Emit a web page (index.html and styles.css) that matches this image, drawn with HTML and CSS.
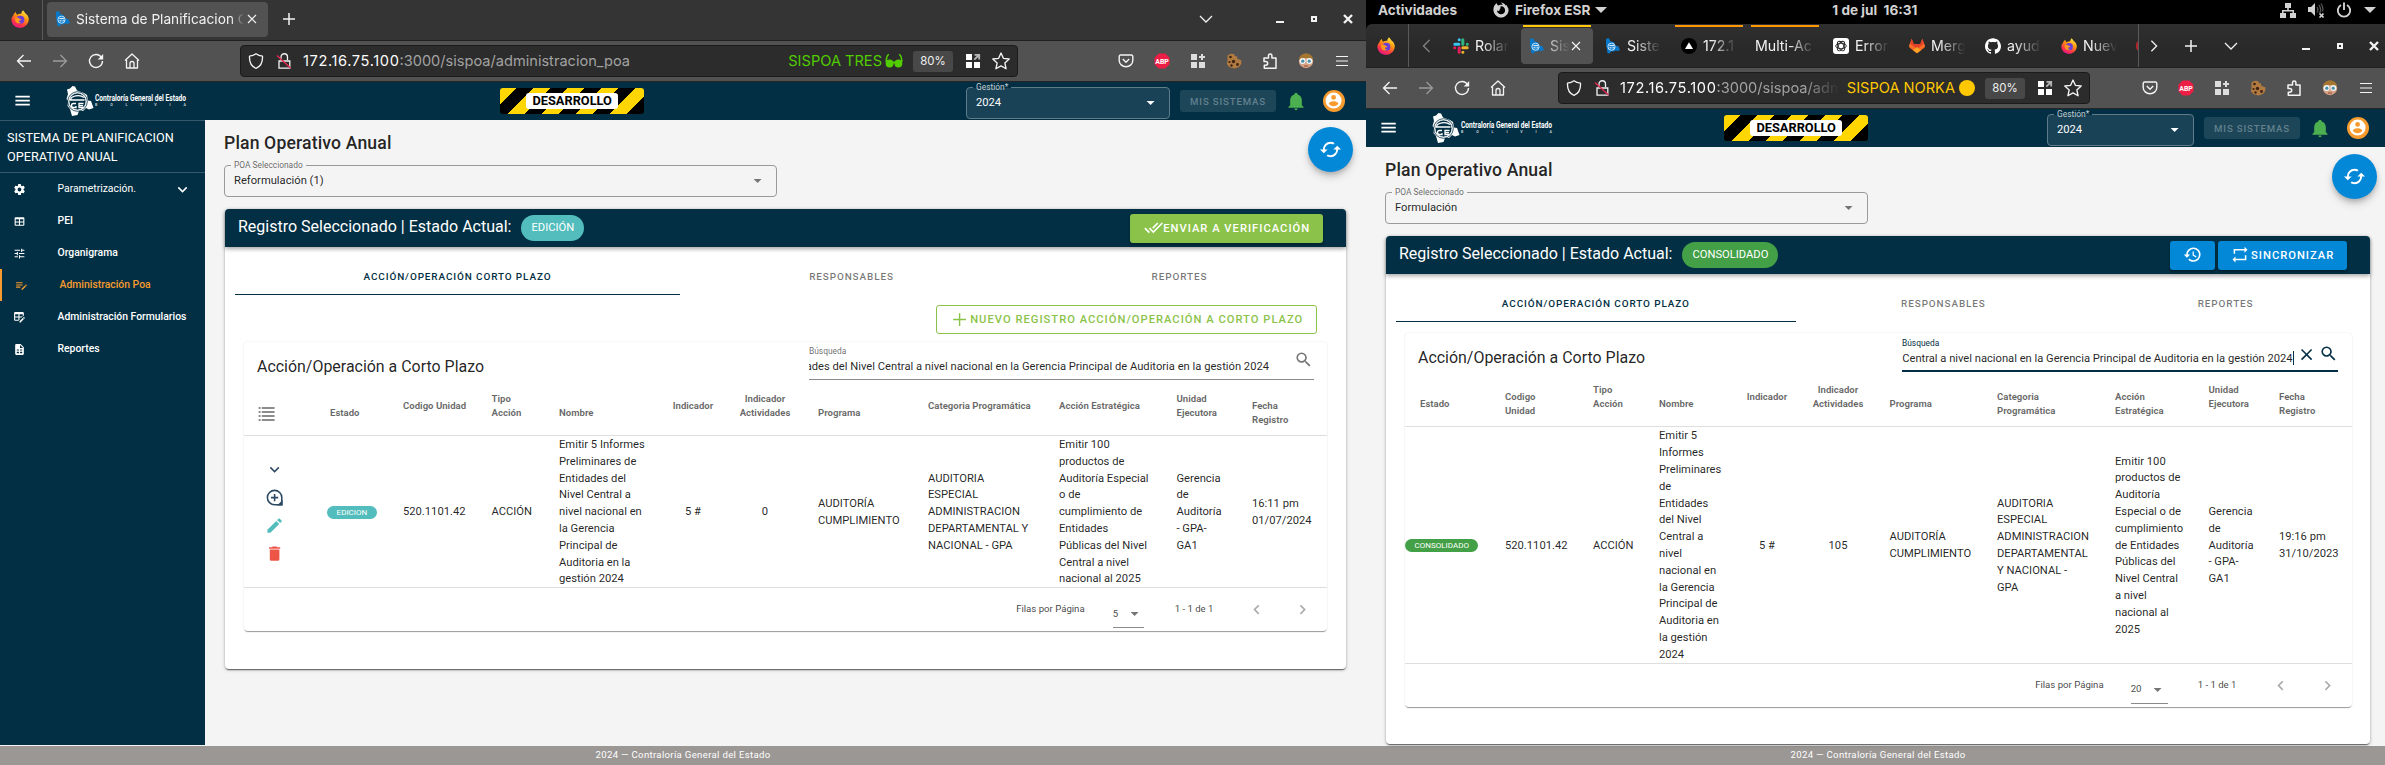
FILE: index.html
```html
<!DOCTYPE html>
<html lang="es">
<head>
<meta charset="utf-8">
<title>Sistema de Planificacion Operativo Anual</title>
<link rel="stylesheet" href="styles.css">
</head>
<body>
<svg class="sprite" xmlns="http://www.w3.org/2000/svg">
<defs>
<linearGradient id="fxg" x1="0.8" y1="0" x2="0.3" y2="1"><stop offset="0" stop-color="#fff44f"/><stop offset=".4" stop-color="#ff980e"/><stop offset=".75" stop-color="#ff3647"/><stop offset="1" stop-color="#e31587"/></linearGradient>
<symbol id="firefox" viewBox="0 0 16 16"><path fill="url(#fxg)" d="M15.3 6.2C14.9 4.9 14 3.9 12.9 3.2 12.4 2 11.2 1 10.7.2 9.6 1.300 9.200 2.500 9.200 3.300 7.600 3.200 6.500 3.600 5.700 4.200 4.600 3.900 4.400 2.300 4.400 1.700 3 2.500 2.200 4 1.900 5 .6 6.200.3 7.800.4 9c.4 4 3.700 6.800 7.600 6.800 4.400 0 7.800-3.400 7.800-7.600 0-.7-.2-1.400-.5-2z"/><circle cx="8.300" cy="8.700" r="3.600" fill="#6b3fd6"/><path fill="#ff9a1f" d="M3.600 7.200c1.500-.8 3-.4 3.900.5 1 .1 1.800.4 1.600 1-.3.600-1.500.5-2 1.100-.1.900.8 1.600 2 1.500-1.500 1.300-4.400.7-5.200-1.200z"/></symbol>
<symbol id="fxmono" viewBox="0 0 16 16"><path fill="currentColor" fill-rule="evenodd" d="M14.500 5c-.4-1-1-1.700-1.800-2.400l.2 1.300C11.600 1.500 9.500.600 7.500.600c1.300.600 1.900 1.500 2.200 2.300-2-.5-3.200.1-3.900.7C4.300 3.300 3.800 2 3.600 1 1.500 2.600.300 5.400.400 8c.2 4.200 3.600 7.600 7.600 7.600s7.600-3.400 7.600-7.600c0-1.100-.4-2.200-1.100-3zM8 12.300c-2.300 0-4-1.700-4-3.700 1.200.7 2.100.2 2.800-.3-.6-1.100 0-1.800 1-2-.5-.5-.6-1.300-.3-1.900 2.700-.4 4.600 1.500 4.600 4 0 2.300-1.800 3.900-4.100 3.900z"/></symbol>
<symbol id="bolivia" viewBox="0 0 16 16"><path fill="#0a78c8" d="M1 .8 4 .300l1.500 3 3.500 1 1.500 3.200 3 .8L15 12l-2.500 1-2-.5-1.500 1-2.500-.3L4.500 15.500 2.500 15 1.700 10 1 7z"/><circle cx="6.500" cy="8.700" r="3.600" fill="#1b86d6" stroke="#d5eafa" stroke-width=".9"/><path stroke="#e8f4fd" d="M4.500 7.600h4.500M4.500 9.800h2M7.500 9.800h2" fill="none"/></symbol>
<symbol id="x" viewBox="0 0 12 12"><path stroke="currentColor" stroke-width="1.200" d="M2 2l8 8M10 2l-8 8" fill="none"/></symbol>
<symbol id="xb" viewBox="0 0 12 12"><path stroke="currentColor" stroke-width="2.400" d="M2 2l8 8M10 2l-8 8" fill="none"/></symbol>
<symbol id="add" viewBox="0 0 16 16"><path stroke="currentColor" stroke-width="1.500" d="M8 2v12M2 8h12" fill="none"/></symbol>
<symbol id="down" viewBox="0 0 16 16"><path stroke="currentColor" stroke-width="1.300" d="M2 5l6 6 6-6" fill="none"/></symbol>
<symbol id="lt" viewBox="0 0 16 16"><path stroke="currentColor" stroke-width="1.600" d="M11 1L4 8l7 7" fill="none"/></symbol>
<symbol id="gt" viewBox="0 0 16 16"><path stroke="currentColor" stroke-width="1.500" d="M5 2l6 6-6 6" fill="none"/></symbol>
<symbol id="min" viewBox="0 0 12 12"><path fill="currentColor" d="M2 8h8v2H2z"/></symbol>
<symbol id="rest" viewBox="0 0 12 12"><path fill="none" stroke="currentColor" stroke-width="2" d="M4 4h4v4H4z"/></symbol>
<symbol id="back" viewBox="0 0 16 16"><path stroke="currentColor" stroke-width="1.300" d="M15 8H1.500M7.500 2l-6 6 6 6" fill="none"/></symbol>
<symbol id="fwd" viewBox="0 0 16 16"><path stroke="currentColor" stroke-width="1.300" d="M1 8h13.500M8.500 2l6 6-6 6" fill="none"/></symbol>
<symbol id="reload" viewBox="0 0 16 16"><path stroke="currentColor" stroke-width="1.400" d="M13.500 4.500A6.500 6.500 0 1 0 14.500 8" fill="none"/><path fill="currentColor" d="M15.200 1v5.500H9.700z"/></symbol>
<symbol id="home" viewBox="0 0 16 16"><path stroke="currentColor" stroke-width="1.300" stroke-linejoin="round" d="M1 7.500L8 1l7 6.500M2.500 7v8h11V7M6 15v-4.500a2 2 0 0 1 4 0V15" fill="none"/></symbol>
<symbol id="shield" viewBox="0 0 16 16"><path stroke="currentColor" stroke-width="1.300" stroke-linejoin="round" d="M8 .8C6.500 2 4 3 1.500 3.200 1.200 9 3.500 13.500 8 15.300c4.500-1.800 6.800-6.300 6.500-12.100C12 3 9.500 2 8 .8z" fill="none"/></symbol>
<symbol id="lock" viewBox="0 0 16 16"><path stroke="currentColor" stroke-width="1.300" d="M5 7V4a3 3 0 0 1 6.500 0v3M3 15.200V8h10.800v7.200z" fill="none"/><path stroke="#e22850" stroke-width="1.500" d="M1 2.500L14.500 15"/></symbol>
<symbol id="qr" viewBox="0 0 16 16"><path fill="#fff" d="M1 1h6v6H1zM1 9h6v6H1zM9 9h6v6H9z"/><path fill="none" stroke="#b5b5b5" stroke-width="1.800" d="M9.300 6.700L14 2M9.500 1.900h4.700v4.700"/></symbol>
<symbol id="gridp" viewBox="0 0 16 16"><path fill="#ddd" d="M1 1h6v6H1zM1 9h6v6H1zM9 9h6v6H9zM11 1h2v6h-2z"/><path fill="#ddd" d="M9 3h6v2H9z"/></symbol>
<symbol id="star" viewBox="0 0 16 16"><path fill="none" stroke="currentColor" stroke-width="1.200" stroke-linejoin="round" d="M8 .9l2.100 4.700 5.200.6-3.900 3.500 1.100 5.200L8 12.300l-4.500 2.600 1.100-5.200L.7 6.200l5.200-.6z"/></symbol>
<symbol id="pocket" viewBox="0 0 16 16"><path fill="none" stroke="currentColor" stroke-width="1.400" d="M2.500 2h11a1.300 1.300 0 0 1 1.300 1.300v4.200a6.800 6.200 0 0 1-13.600 0V3.300A1.300 1.300 0 0 1 2.500 2zM4.800 6L8 9.200 11.200 6"/></symbol>
<symbol id="abp" viewBox="0 0 18 18"><path fill="#ed1e45" d="M5.300.500h7.400l4.800 4.800v7.400l-4.800 4.800H5.300L.500 12.700V5.300z"/><text x="9" y="12" class="abptext" text-anchor="middle">ABP</text></symbol>
<symbol id="cookie" viewBox="0 0 16 16"><path fill="#b07a40" d="M1.500 2.500 4.500.800 8 1l1 2 2 .5.500 2.500 2 .5 2 1-.3 3.500-2.200 3-4.500 1.500-5-1.300L.8 11l.7-3z"/><g fill="#3d2413"><circle cx="4.500" cy="4" r="1.300"/><circle cx="7.500" cy="8.500" r="1.700"/><circle cx="3.500" cy="9" r="1.100"/><circle cx="5.500" cy="12.500" r="1.200"/><circle cx="11.500" cy="11.500" r="1.400"/></g></symbol>
<symbol id="ext" viewBox="0 0 16 16"><path fill="none" stroke="currentColor" stroke-width="1.500" stroke-linejoin="round" d="M2 5h4.500V2.600a1.700 1.700 0 0 1 3.400 0V5H14v10.200H2.300v-3h1.500a1.700 1.700 0 0 0 0-3.800H2z"/></symbol>
<symbol id="face" viewBox="0 0 16 16"><circle cx="8" cy="8" r="7.200" fill="#d9a184"/><path fill="#a5762f" d="M1 7C1 3 4 .5 8 .5S15 3 15 7C12 4.500 5 4 1 7z"/><circle cx="4.600" cy="8" r="3" fill="#eef6f8"/><circle cx="11.400" cy="8" r="3" fill="#eef6f8"/><circle cx="4.800" cy="8.200" r="1.600" fill="#4c8ea3"/><circle cx="11.200" cy="8.200" r="1.600" fill="#4c8ea3"/><path stroke="#8b4a3a" d="M6 13h4"/></symbol>
<symbol id="burger" viewBox="0 0 16 16"><path stroke="currentColor" stroke-width="1.200" d="M2 3.500h12M2 8h12M2 12.500h12"/></symbol>
<symbol id="glasses" viewBox="0 0 18 16"><path fill="none" stroke="#51cd00" stroke-width="1.500" d="M4 1.500C1.500 2 1.300 6 1.200 9M14 1.500c2.500.5 2.700 4.500 2.800 7.500"/><circle cx="4.600" cy="10.500" r="3.900" fill="#51cd00"/><circle cx="13.400" cy="10.500" r="3.900" fill="#51cd00"/><path stroke="#51cd00" stroke-width="2" d="M7 9.500h4"/></symbol>
<symbol id="slack" viewBox="0 0 16 16"><path fill="none" stroke-width="3" stroke-linecap="round" stroke="#36c5f0" d="M1.800 6.200h4M6.200 1.800h.1"/><path fill="none" stroke-width="3" stroke-linecap="round" stroke="#2eb67d" d="M9.800 1.800v4.400M14.200 6.200h.1"/><path fill="none" stroke-width="3" stroke-linecap="round" stroke="#e01e5a" d="M6.200 9.800v4.400M1.700 9.800h.1"/><path fill="none" stroke-width="3" stroke-linecap="round" stroke="#ecb22e" d="M9.800 9.800h4.400M9.800 14.200h.1"/></symbol>
<symbol id="vercel" viewBox="0 0 16 16"><circle cx="8" cy="8" r="8" fill="#000"/><path fill="#fff" d="M8 4.300l4 6.700H4z"/></symbol>
<symbol id="gpt" viewBox="0 0 16 16"><rect width="16" height="16" rx="3" fill="#fff"/><g fill="none" stroke="#222" stroke-width=".9"><ellipse cx="8" cy="8" rx="5.300" ry="2.700"/><ellipse cx="8" cy="8" rx="5.300" ry="2.700" transform="rotate(60 8 8)"/><ellipse cx="8" cy="8" rx="5.300" ry="2.700" transform="rotate(120 8 8)"/></g></symbol>
<symbol id="gitlab" viewBox="0 0 16 16"><path fill="#fc6d26" d="M8 15.200L.4 9.500 0 7.800 2.700.800l2 5.200h6.600l2-5.200L16 7.800l-.4 1.700z"/><path fill="#e24329" d="M2.700.800l2 5.200h6.600l2-5.200 1.500 5L8 11 1.200 5.800z"/><path fill="#fca326" d="M8 15.200l-4-3L8 9l4 3.200z"/></symbol>
<symbol id="github" viewBox="0 0 24 24"><path fill="#fff" d="M12 .297c-6.630 0-12 5.373-12 12 0 5.303 3.438 9.800 8.205 11.385.6.113.82-.258.82-.577 0-.285-.01-1.040-.015-2.040-3.338.724-4.042-1.610-4.042-1.610C4.422 18.070 3.633 17.700 3.633 17.700c-1.087-.744.084-.729.084-.729 1.205.084 1.838 1.236 1.838 1.236 1.070 1.835 2.809 1.305 3.495.998.108-.776.417-1.305.76-1.605-2.665-.3-5.466-1.332-5.466-5.930 0-1.310.465-2.380 1.235-3.220-.135-.303-.54-1.523.105-3.176 0 0 1.005-.322 3.300 1.230.96-.267 1.980-.399 3-.405 1.020.006 2.040.138 3 .405 2.280-1.552 3.285-1.230 3.285-1.230.645 1.653.24 2.873.12 3.176.765.84 1.230 1.910 1.230 3.220 0 4.610-2.805 5.625-5.475 5.920.42.36.81 1.096.81 2.220 0 1.606-.015 2.896-.015 3.286 0 .315.21.69.825.57C20.565 22.092 24 17.592 24 12.297c0-6.627-5.373-12-12-12"/></symbol>
<symbol id="net" viewBox="0 0 16 16"><path fill="currentColor" d="M5 1h6v5H8.800v2H14v3h2v5h-6v-5h2.500V9.500h-9V11H6v5H0v-5h2V8h5.200V6H5z"/></symbol>
<symbol id="vol" viewBox="0 0 16 16"><path fill="currentColor" d="M0 5h3l4-4v13l-4-4H0z"/><path fill="none" stroke="#555" stroke-width="1.300" d="M9 5c1 1.500 1 4 0 5.500M11 3c2 3 2 6 .5 8M13 1.500c2 3 2.300 5.500 1.500 8"/><path stroke="currentColor" stroke-width="1.600" d="M11.500 11.500l4 4M15.500 11.500l-4 4"/></symbol>
<symbol id="power" viewBox="0 0 16 16"><path fill="none" stroke="currentColor" stroke-width="1.900" d="M5 3a6.200 6.200 0 1 0 6 0M8 .5V8"/></symbol>
<symbol id="tri" viewBox="0 0 12 12"><path fill="currentColor" d="M0 3h12L6 9z"/></symbol>
<symbol id="menu" viewBox="0 0 24 24"><path fill="currentColor" d="M3,6H21V8H3V6M3,11H21V13H3V11M3,16H21V18H3V16Z"/></symbol>
<symbol id="cog" viewBox="0 0 24 24"><path fill="currentColor" d="M12,15.500A3.500,3.500 0 0,1 8.500,12A3.500,3.500 0 0,1 12,8.500A3.500,3.500 0 0,1 15.500,12A3.500,3.500 0 0,1 12,15.500M19.430,12.970C19.470,12.650 19.500,12.330 19.500,12C19.500,11.670 19.470,11.340 19.430,11L21.540,9.370C21.730,9.220 21.780,8.950 21.660,8.730L19.660,5.270C19.540,5.050 19.270,4.960 19.050,5.050L16.560,6.050C16.040,5.660 15.500,5.320 14.870,5.070L14.500,2.420C14.460,2.180 14.250,2 14,2H10C9.750,2 9.540,2.180 9.500,2.420L9.130,5.070C8.500,5.320 7.960,5.660 7.440,6.050L4.950,5.050C4.730,4.960 4.460,5.050 4.340,5.270L2.340,8.730C2.210,8.950 2.270,9.220 2.460,9.370L4.570,11C4.530,11.340 4.500,11.670 4.500,12C4.500,12.330 4.530,12.650 4.570,12.970L2.460,14.630C2.270,14.780 2.210,15.050 2.340,15.270L4.340,18.730C4.460,18.950 4.730,19.030 4.950,18.950L7.440,17.940C7.960,18.340 8.500,18.680 9.130,18.930L9.500,21.580C9.540,21.820 9.750,22 10,22H14C14.250,22 14.460,21.820 14.500,21.580L14.870,18.930C15.500,18.670 16.040,18.340 16.560,17.940L19.050,18.950C19.270,19.030 19.540,18.950 19.660,18.730L21.660,15.270C21.780,15.050 21.730,14.780 21.540,14.630L19.430,12.970Z"/></symbol>
<symbol id="table" viewBox="0 0 24 24"><path fill="currentColor" fill-rule="evenodd" d="M5,4H19A2,2 0 0,1 21,6V18A2,2 0 0,1 19,20H5A2,2 0 0,1 3,18V6A2,2 0 0,1 5,4M5,8V12H11V8H5M13,8V12H19V8H13M5,14V18H11V14H5M13,14V18H19V14H13Z"/></symbol>
<symbol id="tune" viewBox="0 0 24 24"><path fill="currentColor" d="M3,17V19H9V17H3M3,5V7H13V5H3M13,21V19H21V17H13V15H11V21H13M7,9V11H3V13H7V15H9V9H7M21,13V11H11V13H21M15,9H17V7H21V5H17V3H15V9Z"/></symbol>
<symbol id="pleditor" viewBox="0 0 24 24"><path fill="currentColor" d="M2,6V8H14V6H2M2,10V12H14V10H2M20.040,10.130C19.900,10.130 19.760,10.190 19.650,10.300L18.650,11.300L20.700,13.350L21.700,12.350C21.920,12.140 21.920,11.790 21.700,11.580L20.420,10.300C20.310,10.190 20.180,10.130 20.040,10.130M18.070,11.880L12,17.940V20H14.060L20.120,13.930L18.070,11.880M2,14V16H10V14H2Z"/></symbol>
<symbol id="tableedit" viewBox="0 0 24 24"><path fill="currentColor" fill-rule="evenodd" d="M21.700,13.350L20.700,14.350L18.650,12.300L19.650,11.300C19.860,11.080 20.210,11.080 20.420,11.300L21.700,12.580C21.920,12.790 21.920,13.140 21.700,13.350M12,18.940L18.070,12.880L20.120,14.930L14.060,21H12V18.940M4,2H18A2,2 0 0,1 20,4V8.170L16.170,12H12V16.170L10.170,18H4A2,2 0 0,1 2,16V4A2,2 0 0,1 4,2M4,6V10H10V6H4M12,6V10H18V6H12M4,12V16H10V12H4Z"/></symbol>
<symbol id="filechart" viewBox="0 0 24 24"><path fill="currentColor" fill-rule="evenodd" d="M14,2H6A2,2 0 0,0 4,4V20A2,2 0 0,0 6,22H18A2,2 0 0,0 20,20V8L14,2M13,3.500L18.500,9H13V3.500M7,12h4v2H7zM13,12h4v2H13zM7,16h4v3H7zM13,16h4v3H13z"/></symbol>
<symbol id="cdown" viewBox="0 0 24 24"><path fill="currentColor" d="M7.410,8.580L12,13.170L16.590,8.580L18,10L12,16L6,10L7.410,8.580Z"/></symbol>
<symbol id="cleft" viewBox="0 0 24 24"><path fill="currentColor" d="M15.410,16.580L10.830,12L15.410,7.410L14,6L8,12L14,18L15.410,16.580Z"/></symbol>
<symbol id="cright" viewBox="0 0 24 24"><path fill="currentColor" d="M8.590,16.580L13.170,12L8.590,7.410L10,6L16,12L10,18L8.590,16.580Z"/></symbol>
<symbol id="mdown" viewBox="0 0 24 24"><path fill="currentColor" d="M7,10L12,15L17,10H7Z"/></symbol>
<symbol id="bell" viewBox="0 0 24 24"><path fill="currentColor" d="M21,19V20H3V19L5,17V11C5,7.900 7.030,5.170 10,4.290C10,4.190 10,4.100 10,4A2,2 0 0,1 12,2A2,2 0 0,1 14,4C14,4.100 14,4.190 14,4.290C16.970,5.170 19,7.900 19,11V17L21,19M14,21A2,2 0 0,1 12,23A2,2 0 0,1 10,21"/></symbol>
<symbol id="account" viewBox="0 0 24 24"><path fill="currentColor" fill-rule="evenodd" d="M12,19.200C9.500,19.200 7.290,17.920 6,16C6.030,14 10,12.900 12,12.900C14,12.900 17.970,14 18,16C16.710,17.920 14.500,19.200 12,19.200M12,5A3,3 0 0,1 15,8A3,3 0 0,1 12,11A3,3 0 0,1 9,8A3,3 0 0,1 12,5M12,2A10,10 0 1,0 22,12A10,10 0 0,0 12,2Z"/></symbol>
<symbol id="cached" viewBox="0 0 24 24"><path fill="currentColor" d="M19,8L15,12H18A6,6 0 0,1 12,18C11,18 10.030,17.750 9.200,17.300L7.740,18.760C8.970,19.540 10.430,20 12,20A8,8 0 0,0 20,12H23M6,12A6,6 0 0,1 12,6C13,6 13.970,6.250 14.800,6.700L16.260,5.240C15.030,4.460 13.570,4 12,4A8,8 0 0,0 4,12H1L5,16L9,12"/></symbol>
<symbol id="checkall" viewBox="0 0 24 24"><path fill="currentColor" d="M0.410,13.410L6,19L7.410,17.580L1.830,12M22.240,5.580L11.660,16.170L7.500,12L6.070,13.410L11.660,19L23.660,7M18,7L16.590,5.580L10.240,11.930L11.660,13.340L18,7Z"/></symbol>
<symbol id="plus" viewBox="0 0 24 24"><path fill="currentColor" d="M20,12.900H12.900V20H11.100V12.900H4V11.100H11.100V4H12.900V11.100H20V12.900Z"/></symbol>
<symbol id="close" viewBox="0 0 24 24"><path fill="currentColor" d="M19,6.410L17.590,5L12,10.590L6.410,5L5,6.410L10.590,12L5,17.590L6.410,19L12,13.410L17.590,19L19,17.590L13.410,12L19,6.410Z"/></symbol>
<symbol id="magnify" viewBox="0 0 24 24"><path fill="currentColor" d="M9.500,3A6.500,6.500 0 0,1 16,9.500C16,11.110 15.410,12.590 14.440,13.730L14.710,14H15.500L20.500,19L19,20.500L14,15.500V14.710L13.730,14.440C12.590,15.410 11.110,16 9.500,16A6.500,6.500 0 0,1 3,9.500A6.500,6.500 0 0,1 9.500,3M9.500,5C7,5 5,7 5,9.500C5,12 7,14 9.500,14C12,14 14,12 14,9.500C14,7 12,5 9.500,5Z"/></symbol>
<symbol id="history" viewBox="0 0 24 24"><path fill="currentColor" d="M13.500,8H12V13L16.280,15.540L17,14.330L13.500,12.250V8M13,3A9,9 0 0,0 4,12H1L4.960,16.030L9,12H6A7,7 0 0,1 13,5A7,7 0 0,1 20,12A7,7 0 0,1 13,19C11.070,19 9.320,18.210 8.060,16.940L6.640,18.360C8.270,20 10.500,21 13,21A9,9 0 0,0 22,12A9,9 0 0,0 13,3"/></symbol>
<symbol id="repeat" viewBox="0 0 24 24"><path fill="currentColor" d="M20.500,13V19.500H6V22.500L2,18.500L6,14.500V17.500H18.500V13H20.500M3.500,11V4.500H18V1.500L22,5.500L18,9.500V6.500H5.500V11H3.500Z"/></symbol>
<symbol id="list" viewBox="0 0 24 24"><path fill="currentColor" d="M2 4h2.500v2H2zM6 4h16v2H6zM2 9h2.500v2H2zM6 9h16v2H6zM2 14h2.500v2H2zM6 14h16v2H6zM2 19h2.500v2H2zM6 19h16v2H6z"/></symbol>
<symbol id="zoomadd" viewBox="0 0 24 24"><path fill="none" stroke="currentColor" stroke-width="2" d="M12 3a9 9 0 1 0 0 18h9v-9a9 9 0 0 0-9-9zM12 7.500v9M7.500 12h9"/><path fill="currentColor" d="M22 15v7h-7z"/></symbol>
<symbol id="pencil" viewBox="0 0 24 24"><path fill="currentColor" d="M20.710,7.040C21.100,6.650 21.100,6 20.710,5.630L18.370,3.290C18,2.900 17.350,2.900 16.960,3.290L15.120,5.120L18.870,8.870M3,17.250V21H6.750L17.810,9.930L14.060,6.180L3,17.250Z"/></symbol>
<symbol id="trash" viewBox="0 0 24 24"><path fill="currentColor" d="M19,4H15.500L14.500,3H9.500L8.500,4H5V6H19M6,19A2,2 0 0,0 8,21H16A2,2 0 0,0 18,19V7H6V19Z"/></symbol>
<symbol id="logo" viewBox="0 0 122 32"><path fill="#fff" d="M1 4.500 4 3.500 6.500 1 9 1.500 11 5.500 18 8 21 10 22 15.500 25 16 27.500 23 23 24.500 20 23 17 26 13 26 11.500 30 6 31 4 24 1.500 21 2 16 .5 14 2 9z"/><circle cx="11.500" cy="16.500" r="8.500" fill="#022f43" stroke="#fff" stroke-width=".8"/><circle cx="11.500" cy="16.500" r="9.800" fill="none" stroke="#022f43" stroke-width=".8"/><path fill="none" stroke="#fff" stroke-width="1.300" d="M18 12.500a7.500 4.500 0 0 0-13.500 2.500h14M10 18.500H7.500a2 2 0 0 0-2 2 2 2 0 0 0 2 2H10V21M17.500 18.500h-4.500v4h4.500M13 20.700H17"/><text class="logoname" x="29" y="15.500" textLength="91" lengthAdjust="spacingAndGlyphs">Contraloría General del Estado</text><text class="logosub" x="29" y="20.500" textLength="91" lengthAdjust="spacing">BOLIVIA</text></symbol>
</defs>
</svg>

<div class="desk">

<section class="win one">
  <div class="tabbar">
    <div class="pin"><svg class="i18"><use href="#firefox"/></svg></div>
    <div class="tab active"><svg class="i16"><use href="#bolivia"/></svg><span class="tabname">Sistema de Planificacion O</span><svg class="i12"><use href="#x"/></svg></div>
    <svg class="i16 newtab"><use href="#add"/></svg>
    <div class="wincontrols"><svg class="i16"><use href="#down"/></svg><svg class="i12 wmin"><use href="#min"/></svg><svg class="i12"><use href="#rest"/></svg><svg class="i12"><use href="#xb"/></svg></div>
  </div>
  <div class="navbar">
    <svg class="i16"><use href="#back"/></svg><svg class="i16 dim"><use href="#fwd"/></svg><svg class="i16"><use href="#reload"/></svg><svg class="i16"><use href="#home"/></svg>
    <div class="urlbar"><svg class="i16"><use href="#shield"/></svg><svg class="i16 lock"><use href="#lock"/></svg><span class="url"><b>172.16.75.100</b>:3000/sispoa/administracion_poa</span><span class="container green">SISPOA TRES</span><svg class="glasses"><use href="#glasses"/></svg><span class="zoom">80%</span><svg class="i16 qr"><use href="#qr"/></svg><svg class="i18"><use href="#star"/></svg></div>
    <div class="addons"><svg class="i16"><use href="#pocket"/></svg><svg class="i16"><use href="#abp"/></svg><svg class="i16"><use href="#gridp"/></svg><svg class="i16"><use href="#cookie"/></svg><svg class="i16"><use href="#ext"/></svg><svg class="i16"><use href="#face"/></svg><svg class="i16"><use href="#burger"/></svg></div>
  </div>
  <header class="appbar">
    <svg class="i19 hamb"><use href="#menu"/></svg><svg class="logo"><use href="#logo"/></svg>
    <div class="hazard"><span>DESARROLLO</span></div>
    <div class="year field"><span class="flabel">Gestión*</span><span class="fvalue">2024</span><svg class="i19"><use href="#mdown"/></svg></div>
    <button class="systems">MIS SISTEMAS</button><svg class="i19 bell"><use href="#bell"/></svg><span class="avatar"><svg class="i19"><use href="#account"/></svg></span>
  </header>
  <div class="body">
    <aside class="side">
      <div class="sidetitle">SISTEMA DE PLANIFICACION<br>OPERATIVO ANUAL</div>
      <nav>
        <a class="thin"><svg><use href="#cog"/></svg><span>Parametrización.</span><svg class="expand"><use href="#cdown"/></svg></a>
        <a><svg><use href="#table"/></svg><span>PEI</span></a>
        <a><svg><use href="#tune"/></svg><span>Organigrama</span></a>
        <a class="current"><svg><use href="#pleditor"/></svg><span>Administración Poa</span></a>
        <a><svg><use href="#tableedit"/></svg><span>Administración Formularios</span></a>
        <a><svg><use href="#filechart"/></svg><span>Reportes</span></a>
      </nav>
    </aside>
    <main>
      <h1>Plan Operativo Anual</h1>
      <div class="poa field"><span class="flabel">POA Seleccionado</span><span class="fvalue">Reformulación (1)</span><svg class="i19"><use href="#mdown"/></svg></div>
      <button class="fab"><svg><use href="#cached"/></svg></button>
      <div class="card">
        <div class="cardhead"><span>Registro Seleccionado | Estado Actual:</span><span class="chip teal">EDICIÓN</span><button class="btn lime"><svg><use href="#checkall"/></svg>ENVIAR A VERIFICACIÓN</button></div>
        <div class="tabs"><span class="on">ACCIÓN/OPERACIÓN CORTO PLAZO</span><span>RESPONSABLES</span><span>REPORTES</span></div>
        <div class="actions"><button class="btn outline"><svg><use href="#plus"/></svg>NUEVO REGISTRO ACCIÓN/OPERACIÓN A CORTO PLAZO</button></div>
        <div class="inner">
          <div class="innerhead"><h2>Acción/Operación a Corto Plazo</h2>
            <div class="search"><div class="stext"><span class="slabel">Búsqueda</span><span class="sclip"><span>ades del Nivel Central a nivel nacional en la Gerencia Principal de Auditoria en la gestión 2024</span></span></div><svg class="i19"><use href="#magnify"/></svg></div>
          </div>
          <div class="cols thead">
            <span class="c3"><svg class="i19 listicon"><use href="#list"/></svg></span><span class="c3 pad3">Estado</span><span class="c2">Codigo Unidad</span><span>Tipo<br>Acción</span><span class="c3">Nombre</span><span class="c2 mid">Indicador</span><span class="mid">Indicador<br>Actividades</span><span class="c3">Programa</span><span class="c2">Categoria Programática</span><span class="c2">Acción Estratégica</span><span>Unidad<br>Ejecutora</span><span class="c2">Fecha<br>Registro</span>
          </div>
          <div class="cols trow">
            <span class="rowicons"><svg class="navy"><use href="#cdown"/></svg><svg class="navy"><use href="#zoomadd"/></svg><svg class="tealc"><use href="#pencil"/></svg><svg class="redc"><use href="#trash"/></svg></span>
            <span><span class="minichip teal">EDICION</span></span><span>520.1101.42</span><span>ACCIÓN</span>
            <span>Emitir 5 Informes<br>Preliminares de<br>Entidades del<br>Nivel Central a<br>nivel nacional en<br>la Gerencia<br>Principal de<br>Auditoria en la<br>gestión 2024</span>
            <span class="mid">5 #</span><span class="mid">0</span><span>AUDITORÍA<br>CUMPLIMIENTO</span>
            <span>AUDITORIA<br>ESPECIAL<br>ADMINISTRACION<br>DEPARTAMENTAL Y<br>NACIONAL - GPA</span>
            <span>Emitir 100<br>productos de<br>Auditoría Especial<br>o de<br>cumplimiento de<br>Entidades<br>Públicas del Nivel<br>Central a nivel<br>nacional al 2025</span>
            <span>Gerencia<br>de<br>Auditoría<br>- GPA-<br>GA1</span><span>16:11 pm<br>01/07/2024</span>
          </div>
          <div class="pager"><span>Filas por Página</span><span class="rows">5<svg class="i19"><use href="#mdown"/></svg></span><span class="range">1 - 1 de 1</span><svg class="i19"><use href="#cleft"/></svg><svg class="i19"><use href="#cright"/></svg></div>
        </div>
      </div>
    </main>
  </div>
  <footer>2024 — Contraloría General del Estado</footer>
</section>

<section class="win two">
  <div class="gnome"><span class="act">Actividades</span><svg class="i16"><use href="#fxmono"/></svg><span class="appname">Firefox ESR</span><svg class="i12"><use href="#tri"/></svg><span class="clock">1 de jul&nbsp;&nbsp;16:31</span><span class="status"><svg class="i16"><use href="#net"/></svg><svg class="i16"><use href="#vol"/></svg><svg class="i16"><use href="#power"/></svg><svg class="i12"><use href="#tri"/></svg></span></div>
  <div class="tabbar">
    <div class="pin"><svg class="i18"><use href="#firefox"/></svg></div>
    <svg class="i14 scroll dim"><use href="#lt"/></svg>
    <div class="strip">
      <div class="tab"><svg class="i16"><use href="#slack"/></svg><span class="tabname">Rolan</span></div>
      <div class="tab active yellow"><svg class="i16"><use href="#bolivia"/></svg><span class="tabname short">Sist</span><svg class="i12"><use href="#x"/></svg></div>
      <div class="tab"><svg class="i16"><use href="#bolivia"/></svg><span class="tabname">Siste</span></div>
      <div class="tab orange"><svg class="i16"><use href="#vercel"/></svg><span class="tabname">172.1</span></div>
      <div class="tab orange"><span class="tabname wide">Multi-Ac</span></div>
      <div class="tab"><svg class="i16"><use href="#gpt"/></svg><span class="tabname">Error</span></div>
      <div class="tab"><svg class="i16"><use href="#gitlab"/></svg><span class="tabname">Merg</span></div>
      <div class="tab"><svg class="i16"><use href="#github"/></svg><span class="tabname">ayud</span></div>
      <div class="tab"><svg class="i16"><use href="#firefox"/></svg><span class="tabname">Nuev</span></div>
      <div class="sliver"></div>
    </div>
    <svg class="i14 more"><use href="#gt"/></svg><svg class="i16 newtab"><use href="#add"/></svg>
    <div class="wincontrols"><svg class="i16"><use href="#down"/></svg><svg class="i12 wmin"><use href="#min"/></svg><svg class="i12"><use href="#rest"/></svg><svg class="i12"><use href="#xb"/></svg></div>
  </div>
  <div class="navbar">
    <svg class="i16"><use href="#back"/></svg><svg class="i16 dim"><use href="#fwd"/></svg><svg class="i16"><use href="#reload"/></svg><svg class="i16"><use href="#home"/></svg>
    <div class="urlbar"><svg class="i16"><use href="#shield"/></svg><svg class="i16 lock"><use href="#lock"/></svg><span class="url"><b>172.16.75.100</b>:3000/sispoa/adm</span><span class="container gold">SISPOA NORKA</span><span class="dot"></span><span class="zoom">80%</span><svg class="i16 qr"><use href="#qr"/></svg><svg class="i18"><use href="#star"/></svg></div>
    <div class="addons"><svg class="i16"><use href="#pocket"/></svg><svg class="i16"><use href="#abp"/></svg><svg class="i16"><use href="#gridp"/></svg><svg class="i16"><use href="#cookie"/></svg><svg class="i16"><use href="#ext"/></svg><svg class="i16"><use href="#face"/></svg><svg class="i16"><use href="#burger"/></svg></div>
  </div>
  <header class="appbar">
    <svg class="i19 hamb"><use href="#menu"/></svg><svg class="logo"><use href="#logo"/></svg>
    <div class="hazard"><span>DESARROLLO</span></div>
    <div class="year field"><span class="flabel">Gestión*</span><span class="fvalue">2024</span><svg class="i19"><use href="#mdown"/></svg></div>
    <button class="systems">MIS SISTEMAS</button><svg class="i19 bell"><use href="#bell"/></svg><span class="avatar"><svg class="i19"><use href="#account"/></svg></span>
  </header>
  <div class="body">
    <main>
      <h1>Plan Operativo Anual</h1>
      <div class="poa field"><span class="flabel">POA Seleccionado</span><span class="fvalue">Formulación</span><svg class="i19"><use href="#mdown"/></svg></div>
      <button class="fab"><svg><use href="#cached"/></svg></button>
      <div class="card">
        <div class="cardhead"><span>Registro Seleccionado | Estado Actual:</span><span class="chip leaf">CONSOLIDADO</span><button class="btn blue hist"><svg><use href="#history"/></svg></button><button class="btn blue sync"><svg><use href="#repeat"/></svg>SINCRONIZAR</button></div>
        <div class="tabs"><span class="on">ACCIÓN/OPERACIÓN CORTO PLAZO</span><span>RESPONSABLES</span><span>REPORTES</span></div>
        <div class="inner">
          <div class="innerhead"><h2>Acción/Operación a Corto Plazo</h2>
            <div class="search focus"><div class="stext"><span class="slabel">Búsqueda</span><span class="sclip"><span>Central a nivel nacional en la Gerencia Principal de Auditoria en la gestión 2024</span></span></div><i class="caret"></i><svg class="i19 clear"><use href="#close"/></svg><svg class="i19"><use href="#magnify"/></svg></div>
          </div>
          <div class="cols thead">
            <span class="c3 pad3">Estado</span><span class="c2">Codigo<br>Unidad</span><span>Tipo<br>Acción</span><span class="c3">Nombre</span><span class="c2 mid">Indicador</span><span class="mid">Indicador<br>Actividades</span><span class="c3">Programa</span><span class="c2">Categoria<br>Programática</span><span class="c2">Acción<br>Estratégica</span><span>Unidad<br>Ejecutora</span><span class="c2">Fecha<br>Registro</span>
          </div>
          <div class="cols trow">
            <span><span class="minichip leaf">CONSOLIDADO</span></span><span>520.1101.42</span><span>ACCIÓN</span>
            <span>Emitir 5<br>Informes<br>Preliminares<br>de<br>Entidades<br>del Nivel<br>Central a<br>nivel<br>nacional en<br>la Gerencia<br>Principal de<br>Auditoria en<br>la gestión<br>2024</span>
            <span class="mid">5 #</span><span class="mid">105</span><span>AUDITORÍA<br>CUMPLIMIENTO</span>
            <span>AUDITORIA<br>ESPECIAL<br>ADMINISTRACION<br>DEPARTAMENTAL<br>Y NACIONAL -<br>GPA</span>
            <span>Emitir 100<br>productos de<br>Auditoría<br>Especial o de<br>cumplimiento<br>de Entidades<br>Públicas del<br>Nivel Central<br>a nivel<br>nacional al<br>2025</span>
            <span>Gerencia<br>de<br>Auditoría<br>- GPA-<br>GA1</span><span>19:16 pm<br>31/10/2023</span>
          </div>
          <div class="pager"><span>Filas por Página</span><span class="rows">20<svg class="i19"><use href="#mdown"/></svg></span><span class="range">1 - 1 de 1</span><svg class="i19"><use href="#cleft"/></svg><svg class="i19"><use href="#cright"/></svg></div>
        </div>
      </div>
    </main>
  </div>
  <footer>2024 — Contraloría General del Estado</footer>
</section>

</div>
</body>
</html>
```
FILE: styles.css
```css
*{box-sizing:border-box}
html,body{margin:0;height:765px;overflow:hidden;background:#f4f4f4}
body{font:400 11.2px/16.8px Roboto,sans-serif;color:rgba(0,0,0,.87)}
svg{display:block;flex:none}
button{font-family:inherit;border:0;padding:0;margin:0}
h1,h2{margin:0}
.sprite{position:absolute;width:0;height:0}
.i12{width:12px;height:12px}
.i14{width:14px;height:14px}
.i16{width:16px;height:16px}
.i18{width:18px;height:18px}
.i19{width:19.2px;height:19.2px}
.desk{display:flex;width:2390px;height:765px}
.win{display:flex;flex-direction:column;height:765px;flex:none}
.one{width:1366px}
.two{width:1024px;background:#000}

/* desktop top bar */
.gnome{height:24px;display:flex;align-items:center;padding:0 14px 4px 12px;background:#000;color:#d2d2d2;font:700 13.6px/20px Inter,sans-serif}
.act{width:115px}
.gnome .appname{margin:0 5px 0 6px;white-space:nowrap}
.gnome .clock{margin-left:225px;white-space:nowrap}
.status{display:flex;align-items:center;margin-left:auto;gap:12px}

/* browser tabs */
.tabbar{display:flex;align-items:center;background:#343434;height:41px;border-bottom:1px solid #202020;color:#f2f2f2;font:400 13.7px/20px Inter,sans-serif;padding-bottom:2px}
.two .tabbar{height:44px;background:linear-gradient(#2f2f2f,#292929 60%);border-radius:6px 0 0 0;padding-bottom:0}
.pin{width:43px;height:42px;border-right:1px solid #5a5a5a;display:flex;align-items:center;padding-left:11px;flex:none}
.tab{display:flex;align-items:center}
.tabname{white-space:nowrap;overflow:hidden;-webkit-mask-image:linear-gradient(90deg,#000 calc(100% - 26px),transparent);mask-image:linear-gradient(90deg,#000 calc(100% - 26px),transparent)}
.one .tab{width:221px;height:35px;margin-left:4px;padding-left:8px;background:#525252;border-radius:4px}
.one .tabname{width:170px;margin-left:5px;-webkit-mask-image:linear-gradient(90deg,#000 155px,transparent 168px);mask-image:linear-gradient(90deg,#000 155px,transparent 168px)}
.one .newtab{margin-left:13px}
.wincontrols{display:flex;align-items:center;margin-left:auto;gap:22px;padding-right:12px}
.wmin{margin-left:38px}
.two .wmin{margin-left:39px}
.two .pin{height:43px}
.scroll{margin-left:11px}
.strip{display:flex;align-items:center;height:43px;margin-left:11px;width:694px;overflow:hidden;border-right:1px solid #5a5a5a;flex:none}
.strip .tab{position:relative;width:72px;height:36px;margin-right:4px;padding-left:8px;border-radius:4px;font-size:14.2px;flex:none}
.strip .active{background:#525252}
.strip .tabname{width:34px;margin-left:6px}
.strip .short{width:20px;margin-left:5px}
.strip .wide{width:60px;margin-left:-2px}
.strip .yellow::before,.strip .orange::before{content:"";position:absolute;top:-3px;left:2px;right:2px;height:2px;background:#ffc60a}
.strip .orange::before{background:#ff9500}
.sliver{width:8px;height:10px;border-radius:5px;background:#b3262c;margin-left:7px;flex:none}
.more{margin-left:8px}
.two .newtab{margin-left:22px}
.two .wincontrols{margin-left:24px;padding:0}

/* browser toolbar */
.navbar{display:flex;align-items:center;height:41px;flex:none;background:#525252;border-bottom:1px solid #252525;color:#f4f4f4;padding-left:16px;gap:20px;font-family:Inter,sans-serif}
.dim{opacity:.45}
.urlbar{display:flex;align-items:center;height:32px;width:778px;margin-left:80px;background:#2c2c2c;border:1px solid #1b1b1b;border-radius:4px;padding:0 7px}
.two .urlbar{width:532px;margin-left:32px}
.lock{margin-left:12px}
.url{flex:1;margin-left:11px;white-space:nowrap;overflow:hidden;color:#a2a2a2;font-size:14.6px;line-height:22px}
.url b{font-weight:400;color:#fbfbfb;letter-spacing:.62px}
.two .url{margin-left:10px;-webkit-mask-image:linear-gradient(90deg,#000 calc(100% - 34px),transparent);mask-image:linear-gradient(90deg,#000 calc(100% - 34px),transparent)}
.container{font-size:14.6px;margin-left:8px;white-space:nowrap}
.green{color:#51cd00}
.gold{color:#ffc800}
.glasses{width:18px;height:16px;margin-left:3px}
.dot{width:16px;height:16px;border-radius:50%;background:#ffc800;margin-left:4px;flex:none}
.zoom{width:40px;height:21px;border-radius:3px;background:#484848;color:#f0f0f0;margin:0 12px 0 10px;font-size:11.4px;line-height:21px;text-align:center;flex:none}
.qr{margin-right:11px}
.addons{display:flex;gap:20px;margin-left:auto;padding-right:16px}
.abptext{font:700 7.8px Roboto,sans-serif;fill:#fff}

/* application bar */
.appbar{display:flex;align-items:center;height:38px;flex:none;background:#022f43;color:#fff;padding:0 21px 0 13px}
.logo{width:122px;height:32px;margin-left:34px}
.logoname{font:700 9px Roboto,sans-serif;fill:#fff}
.logosub{font:700 3.600px Roboto,sans-serif;fill:#c9d3d8}
.hazard{width:144px;height:26px;margin-left:312px;border-radius:3px;display:flex;align-items:center;justify-content:center;background:repeating-linear-gradient(135deg,#ffd600 0 12px,#000 12px 24px)}
.two .hazard{margin-left:170px}
.hazard span{background:#fff;border-radius:3px;color:#000;font-weight:700;font-size:12.8px;line-height:16px;padding:0 6px}
.field{position:relative;display:flex;align-items:center;height:32px;border:1px solid #9a9a9a;border-radius:4px;padding-left:9px}
.field .i19{margin-left:auto}
.flabel{position:absolute;left:6px;top:-6px;padding:0 3px;font-size:8.400px;line-height:11px;color:rgba(0,0,0,.6);background:#f4f4f4}
.fvalue{padding-top:1px}
.year{width:204px;margin-left:auto;background:#1a4256;border-color:#5f7c89;padding-right:9px;margin-top:3px}
.two .year{width:147px}
.year .flabel{background:linear-gradient(#022f43 55%,#1a4256 55%);color:#c2cdd2}
.systems{width:96px;height:22px;margin-left:10px;border-radius:3px;background:#1d4659;color:#62808d;font-weight:500;font-size:9.600px;letter-spacing:.86px}
.bell{color:#4caf50;margin-left:10px;width:20px;height:20px}
.avatar{width:22px;height:22px;margin-left:17px;border-radius:50%;background:#f79b2e;display:flex;align-items:center;justify-content:center}

/* sidebar */
.body{display:flex;flex:1;min-height:0;background:#f4f4f4}
.side{width:205px;background:#022f43;color:#fff;margin-bottom:1px;border-top:1px solid #35586a}
.sidetitle{height:52px;padding:7px 0 0 7px;font-size:12.700px;line-height:19px;border-bottom:1px solid #35586a}
.side nav a{display:flex;align-items:center;height:32px;padding:1px 0 0 12.500px;font-weight:500;font-size:10.400px}
.side nav svg{width:13px;height:13px}
.side nav span{margin-left:32px}
.side nav .thin{font-weight:400}
.side nav .expand{width:19px;height:19px;margin:0 13px 0 auto}
.side nav .current{color:#f79b2e;border-left:2px solid #f79b2e}

/* page */
main{position:relative;flex:1;padding:0 20px 0 19px;min-width:0}
h1{height:45px;font-weight:500;font-size:17.600px;line-height:46px;letter-spacing:.15px}
.poa{width:553px}
.two .poa{width:483px}
.poa .i19{color:#757575;margin-right:9px}
.fab{position:absolute;right:13px;top:7px;width:45px;height:45px;border-radius:50%;background:#0388d8;color:#fff;display:flex;align-items:center;justify-content:center;box-shadow:0 3px 5px -1px rgba(0,0,0,.2),0 5px 8px rgba(0,0,0,.16)}
.fab svg{width:23px;height:23px}
.card{margin:12px 0 0 1px;height:460px;background:#fff;border-radius:4px;box-shadow:0 2px 1px -1px rgba(0,0,0,.4),0 1px 2px rgba(0,0,0,.3),0 1px 4px rgba(0,0,0,.15)}
.two .card{height:508px}
.cardhead{display:flex;align-items:center;height:38px;background:#022f43;color:#fff;border-radius:4px 4px 0 0;padding:0 23px 0 13px;font-size:16px;box-shadow:0 2px 4px rgba(0,0,0,.35)}
.cardhead>span:first-child{margin-top:-1px;white-space:nowrap}
.chip{height:26px;border-radius:13px;padding:0 10px;margin-left:10px;font-size:11.200px;line-height:26px}
.teal{background:#52bdbc}
.leaf{background:#43a047}
.btn{display:flex;align-items:center;height:29px;border-radius:3px;color:#fff;font-weight:500;font-size:11.200px;letter-spacing:1px;white-space:nowrap}
.btn svg{width:19.200px;height:19.200px}
.lime{width:193px;margin-left:auto;background:#8bc34a;padding-left:14px;box-shadow:0 2px 3px rgba(0,0,0,.3)}
.blue{background:#0388d8;box-shadow:0 2px 3px rgba(0,0,0,.3)}
.hist{width:45px;margin-left:auto;padding-left:13px}
.sync{width:129px;margin-left:3px;padding-left:13px}
.sync svg{width:18px;margin-right:2px}
.tabs{display:flex;height:48px;padding:12px 10px 0;color:rgba(0,0,0,.54);font-weight:500;font-size:9.950px;letter-spacing:.89px;text-align:center;line-height:36px}
.tabs span{width:342px}
.tabs span+span{padding-left:1px}
.tabs span:last-child{width:314px}
.tabs .on{width:445px;color:#022f43;border-bottom:1px solid #022f43}
.two .tabs span{width:295px}
.two .tabs span:last-child{width:270px}
.two .tabs .on{width:400px}
.actions{display:flex;justify-content:flex-end;padding:10px 29px 8px 0}
.outline{width:381px;background:none;border:1px solid #8bc34a;color:#8bc34a;padding-left:13px}
.outline svg{margin-right:1px}
.inner{margin:0 19px;border-radius:4px;box-shadow:0 2px 1px -1px rgba(0,0,0,.3),0 1px 1px rgba(0,0,0,.12),0 0 2px rgba(0,0,0,.1)}
.two .inner{margin-top:11px;margin-right:18px}
.innerhead{display:flex;height:44px;padding:0 13px}
.innerhead h2{font-weight:400;font-size:15.950px;line-height:50px;height:44px}
.search{display:flex;margin-left:auto;width:505px;height:38px;border-bottom:1px solid #8a8a8a;color:rgba(0,0,0,.87)}
.search .i19{color:#757575;margin-top:8px}
.stext{width:460px;margin-right:25px;overflow:hidden}
.slabel{display:block;font-size:8.400px;line-height:11px;padding-top:4px;color:rgba(0,0,0,.6)}
.sclip{display:flex;justify-content:flex-end;white-space:nowrap;overflow:hidden;line-height:19px}
.search.focus{width:436px;border-bottom:2px solid #022f43;height:39px;margin-right:1px}
.focus .slabel,.focus .i19{color:#022f43}
.focus .slabel{padding-top:5px}
.focus .stext{width:391px;margin-right:0}
.focus .sclip{letter-spacing:-.01px}
.caret{width:1px;height:14px;margin:18px 3px 0 0;background:#022f43}
.search.focus .i19{margin-top:11px}
.search.focus .clear{margin-right:3px;margin-top:12px}
.cols{display:grid;grid-template-columns:83px 76px 88.500px 67.500px 98px 72px 89px 110px 131px 117.500px 75.500px 1fr}
.two .cols{grid-template-columns:100px 88px 66px 72px 71px 87.500px 107.500px 118px 93.500px 70.500px 1fr}
.thead{height:50px;border-bottom:1px solid #dedede;font-weight:700;font-size:9.600px;line-height:14px;color:rgba(0,0,0,.6)}
.thead>span{padding-top:6px}
.thead .c2{padding-top:13px}
.thead .c3{padding-top:20px}
.thead .pad3{padding-left:3px}
.two .thead .pad3{padding-left:15px}
.thead .mid,.trow .mid{width:72px;text-align:center}
.listicon{margin:-2px 0 0 13px}
.trow{height:152px;align-items:center;border-bottom:1px solid #dedede;white-space:nowrap}
.trow>span{transform:translateY(1px)}
.two .trow{height:237px}
.trow .rowicons{display:flex;flex-direction:column;align-items:center;gap:9px;width:61px;transform:none}
.rowicons svg{width:19.200px;height:19.200px}
.navy{color:#2e4a63}
.tealc{color:#52bdbc}
.redc{color:#ed5547}
.minichip{display:inline-block;height:13px;border-radius:7px;padding:0 9.600px;color:#fff;font-size:8px;line-height:13px;vertical-align:middle}
.pager{display:flex;align-items:center;height:43px;font-size:9.600px;color:rgba(0,0,0,.75);padding-right:15px}
.pager>span:first-child{margin-left:auto}
.pager .rows{display:flex;align-items:center;width:31px;height:27px;margin:10px 31px 0 28px;border-bottom:1px solid #8a8a8a}
.two .pager .rows{width:37px;margin:9px 30px 0 27px}
.rows .i19{color:#757575;margin:0 -1px 0 auto}
.two .rows .i19{margin-right:0}
.pager>.i19{color:#aaa}
.range{width:72px;white-space:nowrap}
.two .range{width:73px}
.pager>.i19:last-child{margin-left:27px}
.two .pager>.i19:last-child{margin-left:28px}
footer{height:19px;flex:none;background:#9b9795;color:#fff;text-align:center;font-size:9.600px;line-height:18px;letter-spacing:.32px}
```
